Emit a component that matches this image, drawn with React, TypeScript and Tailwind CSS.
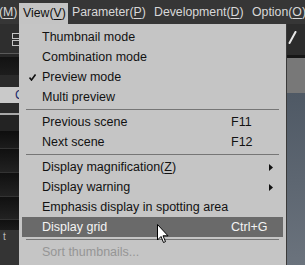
type Item =
  | { sep: true }
  | {
      sep?: false
      label: string
      mnemonic?: string
      shortcut?: string
      checked?: boolean
      submenu?: boolean
      active?: boolean
      disabled?: boolean
    }

const items: Item[] = [
  { label: "Thumbnail mode" },
  { label: "Combination mode" },
  { label: "Preview mode", checked: true },
  { label: "Multi preview" },
  { sep: true },
  { label: "Previous scene", shortcut: "F11" },
  { label: "Next scene", shortcut: "F12" },
  { sep: true },
  { label: "Display magnification", mnemonic: "Z", submenu: true },
  { label: "Display warning", submenu: true },
  { label: "Emphasis display in spotting area" },
  { label: "Display grid", shortcut: "Ctrl+G", active: true },
  { sep: true },
  { label: "Sort thumbnails...", disabled: true },
]

function Mn({ text, k }: { text: string; k: string }) {
  return (
    <span>
      {text}(<span className="underline underline-offset-2">{k}</span>)
    </span>
  )
}

function MenuRow({ item }: { item: Item }) {
  if (item.sep) {
    return (
      <div className="h-[5px] flex items-center px-[7px]">
        <div className="h-px w-full bg-[#767676]" />
      </div>
    )
  }
  const color = item.active ? "text-[#f4f4f4]" : item.disabled ? "text-[#959595]" : "text-[#121212]"
  return (
    <div className={`relative mx-[3px] h-[20px] flex items-center pl-[20px] ${item.active ? "bg-[#6a6a6a]" : ""} ${color}`}>
      {item.checked && (
        <svg className="absolute left-[7px] top-[7px]" width="7" height="7" viewBox="0 0 7 7">
          <path d="M0.5 3.5 L2.5 6 L6.5 0.5" stroke="#111" strokeWidth="1.6" fill="none" />
        </svg>
      )}
      <span className="w-[189px] whitespace-nowrap">
        {item.mnemonic ? <Mn text={item.label} k={item.mnemonic} /> : item.label}
      </span>
      {item.shortcut && <span className="whitespace-nowrap">{item.shortcut}</span>}
      {item.submenu && (
        <svg className="ml-auto mr-[10px]" width="4" height="7" viewBox="0 0 4 7">
          <path d="M0 0 L4 3.5 L0 7 Z" fill="#111" />
        </svg>
      )}
    </div>
  )
}

export default function App() {
  return (
    <div
      className="relative w-[305px] h-[265px] overflow-hidden bg-[#2b2b2b] flex flex-col"
      style={{ fontFamily: "'Liberation Sans', Arial, sans-serif" }}
    >
      {/* Menu bar */}
      <div className="h-[24px] shrink-0 flex items-stretch bg-[#363636] text-[12.3px] text-[#d8d8d8] whitespace-nowrap">
        <span className="w-[19px] shrink-0 flex items-center">
          <span className="ml-[-1px]">
            (<span className="underline underline-offset-2">M</span>)
          </span>
        </span>
        <span className="w-[49px] shrink-0 mt-[3px] pl-[4px] flex items-center bg-[#c4c4c4] text-[#111]">
          <Mn text="View" k="V" />
        </span>
        <span className="w-[82px] shrink-0 pl-[4px] flex items-center">
          <Mn text="Parameter" k="P" />
        </span>
        <span className="w-[98px] shrink-0 pl-[4px] flex items-center">
          <Mn text="Development" k="D" />
        </span>
        <span className="shrink-0 pl-[4px] flex items-center">
          <Mn text="Option" k="O" />
        </span>
      </div>

      {/* Background panels */}
      <div className="flex flex-1">
        <div className="w-[19px] flex flex-col">
          <div className="h-[29px] bg-[#2e2e2e] relative">
            <div className="absolute left-[12px] top-[9px] w-[8px] h-[6px] border border-[#c4c4c4]" />
            <div className="absolute left-[12px] top-[16px] w-[8px] h-[6px] border border-[#c4c4c4]" />
          </div>
          <div className="h-px bg-[#5a5a5a]" />
          <div className="h-[3px] bg-[#262626]" />
          <div className="h-[18px] bg-gradient-to-b from-[#121212] to-[#1d1d1d]" />
          <div className="h-[12px] bg-[#2a2a2a]" />
          <div className="h-[16px] bg-[#c9c9c9] text-[12px] text-[#1a2a6a] leading-[16px] pl-[15px]">C</div>
          <div className="h-[10px] bg-[#2a2a2a]" />
          <div className="h-[2px] bg-[#a8a8a8]" />
          <div className="h-[16px] bg-[#232323]" />
          <div className="h-[18px] bg-gradient-to-b from-[#0e0e0e] to-[#1c1c1c] border-b border-[#333]" />
          <div className="h-[24px] bg-gradient-to-b from-[#101010] to-[#222] border-b border-[#333]" />
          <div className="h-[24px] bg-gradient-to-b from-[#101010] to-[#222] border-b border-[#333]" />
          <div className="h-[23px] bg-gradient-to-b from-[#101010] to-[#222] border-b border-[#333]" />
          <div className="h-[10px] bg-gradient-to-b from-[#101010] to-[#1a1a1a]" />
          <div className="flex-1 bg-[#343434] text-[10px] text-[#bbb] pl-[3px] leading-[14px]">t</div>
        </div>
        <div className="flex-1 bg-[#2b2b2b]" />
        <div className="w-[18px] flex flex-col">
          <div className="h-[31px] bg-[#2c2c2c] relative">
            <svg className="absolute left-[1px] top-[7px]" width="9" height="13" viewBox="0 0 9 13">
              <path d="M7.5 1 L1.5 12" stroke="#e8e8e8" strokeWidth="2" strokeLinecap="round" />
            </svg>
          </div>
          <div className="h-[3px] bg-[#161616]" />
          <div className="h-[35px] bg-[#787878]" />
          <div className="flex-1 bg-gradient-to-b from-[#4f5965] to-[#6b737d]" />
        </div>
      </div>

      {/* Dropdown */}
      <div className="absolute left-[19px] top-[24px] bottom-0 w-[268px] bg-[#c5c5c5] border-r border-[#3a3a3a] pt-[3px] text-[12.5px]">
        {items.map((it, i) => (
          <MenuRow key={i} item={it} />
        ))}
      </div>

      {/* Cursor */}
      <svg className="absolute left-[157px] top-[224px]" width="12" height="20" viewBox="0 0 12 20">
        <path
          d="M0.5 0.5 L0.5 16 L4 12.5 L6.5 18.5 L8.5 17.6 L6 11.8 L11 11.8 Z"
          fill="#fff"
          stroke="#000"
          strokeWidth="1"
          strokeLinejoin="round"
        />
      </svg>
    </div>
  )
}
